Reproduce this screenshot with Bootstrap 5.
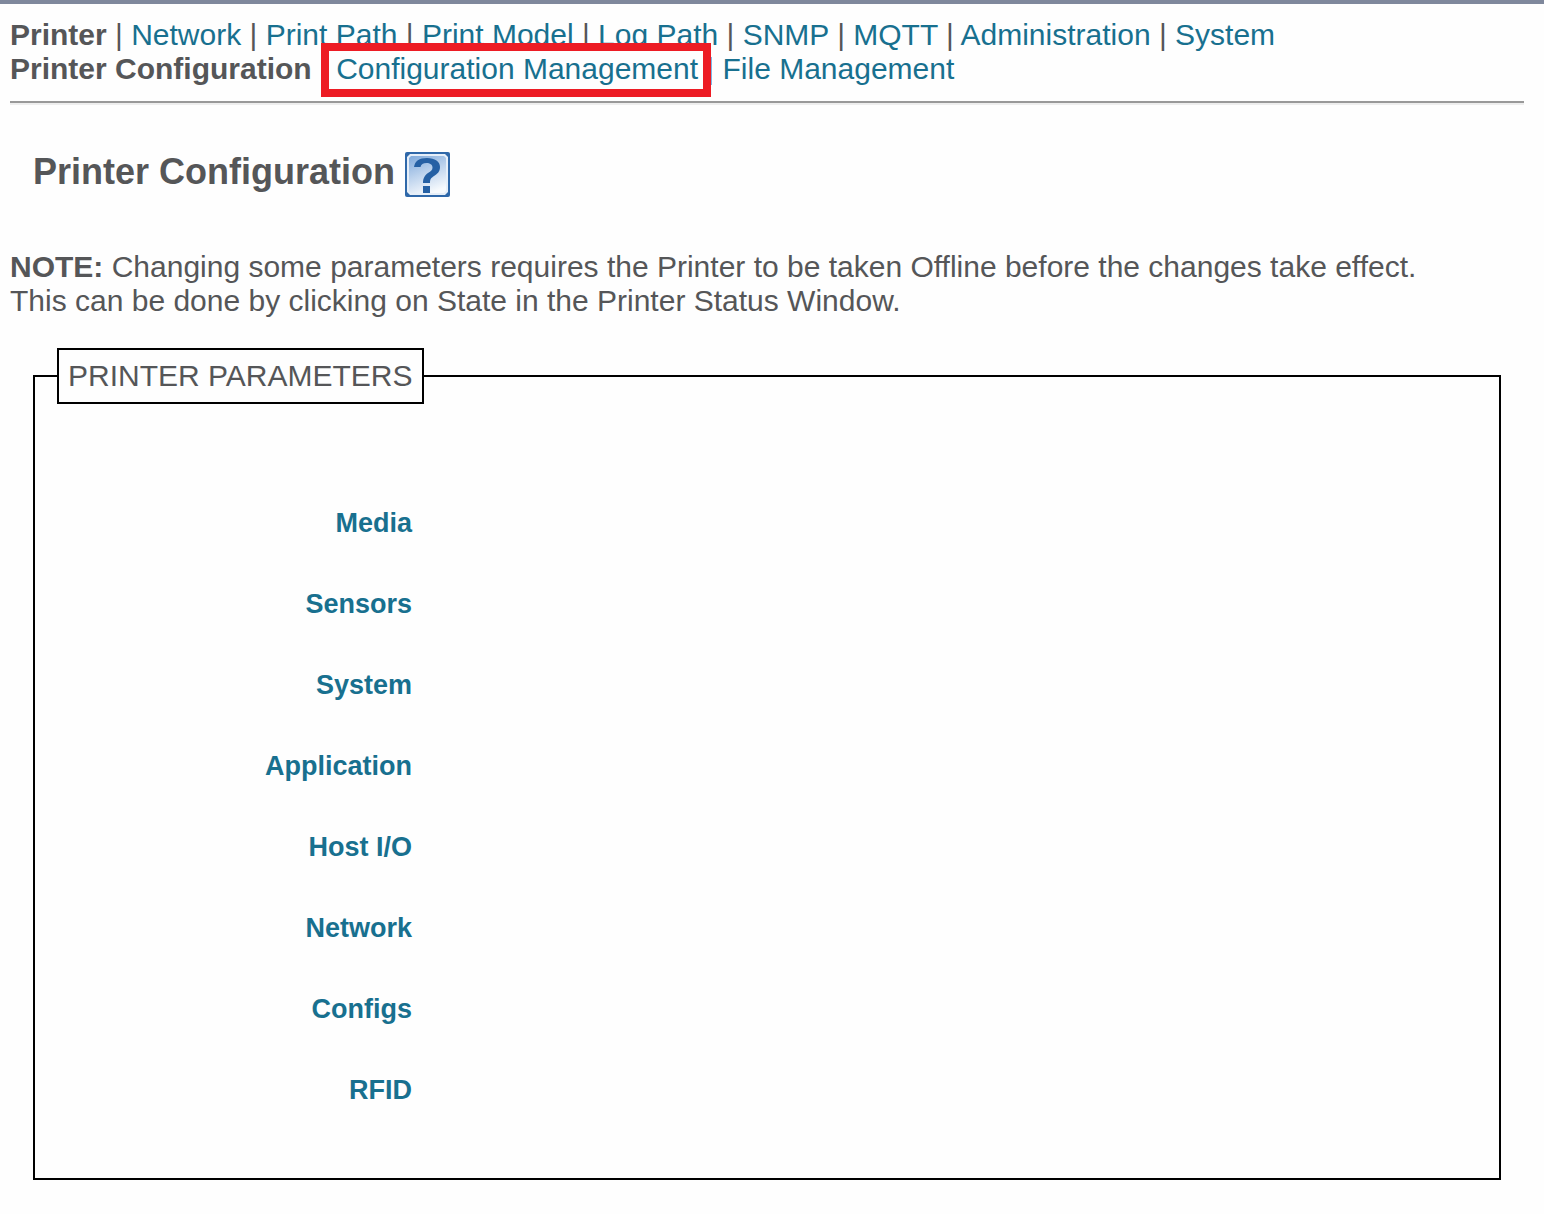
<!DOCTYPE html>
<html lang="en">
<head>
<meta charset="utf-8">
<meta name="viewport" content="width=device-width, initial-scale=1">
<title>Printer Configuration</title>
<link href="https://cdn.jsdelivr.net/npm/bootstrap@5.3.0/dist/css/bootstrap.min.css" rel="stylesheet">
<style>
body {
  font-family: "Liberation Sans", Arial, sans-serif;
  font-size: 30px;
  line-height: 34px;
  color: #555658;
  background: #fefefe;
  border-top: 4px solid #7f889c;
}
a { color: #18708f; text-decoration: none; }
a:hover { color: #0f4f66; text-decoration: underline; }
.page { padding: 14px 20px 24px 10px; }
.callout-box { position: relative; }
.callout-box::after {
  content: "";
  position: absolute;
  inset: -9px -13px -11px -15px;
  border: 8px solid #ed1c24;
  pointer-events: none;
}
.rule {
  margin: 15px 0 0;
  border: 0;
  border-top: 2px solid #999;
  border-bottom: 2px solid #eee;
  opacity: 1;
}
.inset-block { margin-left: 23px; margin-right: 23px; }
.title-row { margin-top: 47px; gap: 10px; }
.title-row h1 { font-size: 36px; line-height: 40px; }
.help-link svg { width: 45px; height: 45px; }
.note-text { margin-top: 53px; }
.params { margin-top: 30px; border: 2px solid #000; padding: 0 0 47px 22px; }
.params legend {
  font-size: 30px;
  line-height: 52px;
  border: 2px solid #000;
  padding: 0 9px;
}
.param-list { width: 355px; padding-top: 79px; font-size: 27px; }
.param-list a { line-height: 81px; display: inline-block; }
</style>
</head>
<body>
<div class="page">
  <nav aria-label="Sections">
    <strong>Printer</strong> | <a href="#">Network</a> | <a href="#">Print Path</a> | <a href="#">Print Model</a> | <a href="#">Log Path</a> | <a href="#">SNMP</a> | <a href="#">MQTT</a> | <a href="#">Administration</a> | <a href="#">System</a>
  </nav>
  <nav aria-label="Printer pages">
    <strong>Printer Configuration</strong> | <a href="#" class="callout-box d-inline-block">Configuration Management</a> | <a href="#">File Management</a>
  </nav>
  <hr class="rule">

  <div class="title-row inset-block d-flex align-items-start">
    <h1 class="fw-bold mb-0">Printer Configuration</h1>
    <a href="#" class="help-link d-flex" aria-label="Help">
      <svg viewBox="0 0 45 45" aria-hidden="true">
        <defs>
          <linearGradient id="helpFill" x1=".2" y1="0" x2=".6" y2="1">
            <stop offset="0" stop-color="#86aedd"/>
            <stop offset=".5" stop-color="#c0d5ee"/>
            <stop offset="1" stop-color="#f7fafd"/>
          </linearGradient>
        </defs>
        <rect width="45" height="45" rx="2" fill="#2f68a9"/>
        <path d="M5 2H40L43 5V40L40 43H5L2 40V5Z" fill="#e6eff9"/>
        <path d="M6 4H39L41 6V39L39 41H6L4 39V6Z" fill="url(#helpFill)"/>
        <path d="M9 15C10 9 14 6 22 6C30 6 35 9.500 35 15C35 20 32 22 29 24C26 26 25 27 25 31H18C18 26 20 23 23 21C26 19 27.500 18 27.500 15.500C27.500 12.500 25 11 21.500 11C18 11 16 12.500 15.500 15Z" fill="#2560a4"/>
        <rect x="18" y="34" width="7" height="7" fill="#2560a4"/>
      </svg>
    </a>
  </div>

  <p class="note-text mb-0"><strong>NOTE:</strong> Changing some parameters requires the Printer to be taken Offline before the changes take effect.<br>This can be done by clicking on State in the Printer Status Window.</p>

  <fieldset class="params inset-block">
    <legend class="float-none w-auto mb-0">PRINTER PARAMETERS</legend>
    <ul class="param-list list-unstyled mb-0 text-end fw-bold">
      <li><a href="#">Media</a></li>
      <li><a href="#">Sensors</a></li>
      <li><a href="#">System</a></li>
      <li><a href="#">Application</a></li>
      <li><a href="#">Host I/O</a></li>
      <li><a href="#">Network</a></li>
      <li><a href="#">Configs</a></li>
      <li><a href="#">RFID</a></li>
    </ul>
  </fieldset>
</div>
<script src="https://cdn.jsdelivr.net/npm/bootstrap@5.3.0/dist/js/bootstrap.bundle.min.js"></script>
</body>
</html>
